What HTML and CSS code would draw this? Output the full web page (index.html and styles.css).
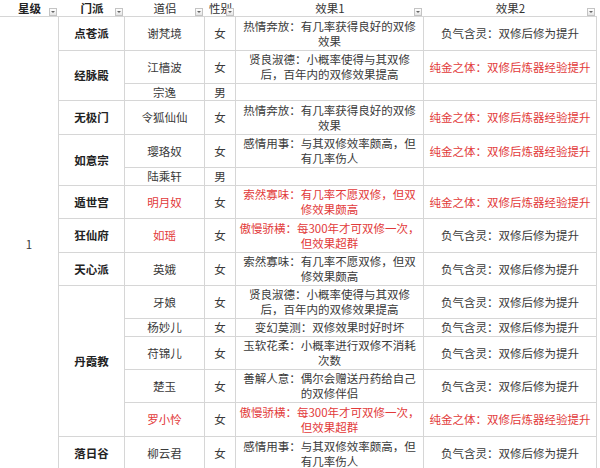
FILE: index.html
```html
<!DOCTYPE html>
<html lang="zh">
<head>
<meta charset="utf-8">
<title>双修伴侣</title>
<link rel="stylesheet" href="styles.css">
</head>
<body>
<div class="sheet">
  <div class="hd bold">星级<span class="filter"></span></div>
  <div class="hd bold">门派<span class="filter"></span></div>
  <div class="hd">道侣<span class="filter"></span></div>
  <div class="hd">性别<span class="filter"></span></div>
  <div class="hd">效果1<span class="filter"></span></div>
  <div class="hd">效果2<span class="filter"></span></div>

  <div class="c star">1</div>

  <div class="c sect">点苍派</div>
  <div class="c">谢梵境</div>
  <div class="c">女</div>
  <div class="c">热情奔放：有几率获得良好的双修<br>效果</div>
  <div class="c">负气含灵：双修后修为提升</div>

  <div class="c sect span2">经脉殿</div>
  <div class="c">江樯波</div>
  <div class="c">女</div>
  <div class="c">贤良淑德：小概率使得与其双修<br>后，百年内的双修效果提高</div>
  <div class="c red">纯金之体：双修后炼器经验提升</div>
  <div class="c">宗逸</div>
  <div class="c">男</div>
  <div class="c"></div>
  <div class="c"></div>

  <div class="c sect">无极门</div>
  <div class="c">令狐仙仙</div>
  <div class="c">女</div>
  <div class="c">热情奔放：有几率获得良好的双修<br>效果</div>
  <div class="c red">纯金之体：双修后炼器经验提升</div>

  <div class="c sect span2">如意宗</div>
  <div class="c">璎珞奴</div>
  <div class="c">女</div>
  <div class="c">感情用事：与其双修效率颇高，但<br>有几率伤人</div>
  <div class="c red">纯金之体：双修后炼器经验提升</div>
  <div class="c">陆乘轩</div>
  <div class="c">男</div>
  <div class="c"></div>
  <div class="c"></div>

  <div class="c sect">遁世宫</div>
  <div class="c red">明月奴</div>
  <div class="c">女</div>
  <div class="c red">索然寡味：有几率不愿双修，但双<br>修效果颇高</div>
  <div class="c red">纯金之体：双修后炼器经验提升</div>

  <div class="c sect">狂仙府</div>
  <div class="c red">如瑶</div>
  <div class="c">女</div>
  <div class="c red">傲慢骄横：每300年才可双修一次，<br>但效果超群</div>
  <div class="c">负气含灵：双修后修为提升</div>

  <div class="c sect">天心派</div>
  <div class="c">英娥</div>
  <div class="c">女</div>
  <div class="c">索然寡味：有几率不愿双修，但双<br>修效果颇高</div>
  <div class="c">负气含灵：双修后修为提升</div>

  <div class="c sect span5">丹霞教</div>
  <div class="c">牙娘</div>
  <div class="c">女</div>
  <div class="c">贤良淑德：小概率使得与其双修<br>后，百年内的双修效果提高</div>
  <div class="c">负气含灵：双修后修为提升</div>
  <div class="c">杨妙儿</div>
  <div class="c">女</div>
  <div class="c">变幻莫测：双修效果时好时坏</div>
  <div class="c">负气含灵：双修后修为提升</div>
  <div class="c">苻锦儿</div>
  <div class="c">女</div>
  <div class="c">玉软花柔：小概率进行双修不消耗<br>次数</div>
  <div class="c">负气含灵：双修后修为提升</div>
  <div class="c">楚玉</div>
  <div class="c">女</div>
  <div class="c">善解人意：偶尔会赠送丹药给自己<br>的双修伴侣</div>
  <div class="c">负气含灵：双修后修为提升</div>
  <div class="c red">罗小怜</div>
  <div class="c">女</div>
  <div class="c red">傲慢骄横：每300年才可双修一次，<br>但效果超群</div>
  <div class="c red">纯金之体：双修后炼器经验提升</div>

  <div class="c sect">落日谷</div>
  <div class="c">柳云君</div>
  <div class="c">女</div>
  <div class="c">感情用事：与其双修效率颇高，但<br>有几率伤人</div>
  <div class="c">负气含灵：双修后修为提升</div>
</div>
</body>
</html>
```
FILE: styles.css
```css
html, body {
  margin: 0;
  padding: 0;
  background: #ffffff;
  overflow: hidden;
}

body {
  font-family: "Noto Sans CJK SC", "Noto Sans", sans-serif;
  font-size: 11.5px;
  color: #3a3a3a;
}

.sheet {
  display: grid;
  width: 597px;
  grid-template-columns: 59px 66px 80px 31px 188px 173px;
  grid-template-rows: 17px 34px 33px 17px 34px 33px 18px 33px 34px 33px 33px 18px 33px 33px 34px 34px;
}

.hd {
  position: relative;
  display: flex;
  align-items: center;
  justify-content: center;
  border-bottom: 1px solid #d6d6d6;
  box-sizing: border-box;
  line-height: 14px;
  padding-bottom: 1px;
  color: #333;
}

.bold {
  font-weight: bold;
  color: #222;
}

.filter {
  position: absolute;
  right: 2px;
  bottom: 0;
  width: 8px;
  height: 8px;
  box-sizing: border-box;
  border: 1px solid #c4c4c4;
  background: linear-gradient(#ffffff, #e6e6e6);
}

.filter::after {
  content: "";
  position: absolute;
  left: 1px;
  top: 2px;
  border-left: 2px solid transparent;
  border-right: 2px solid transparent;
  border-top: 2px solid #666;
}

.c {
  display: flex;
  align-items: center;
  justify-content: center;
  text-align: center;
  box-sizing: border-box;
  border-right: 1px solid #d6d6d6;
  border-bottom: 1px solid #d6d6d6;
  line-height: 15px;
  white-space: nowrap;
  overflow: hidden;
}

.star {
  grid-row: span 15;
  border-bottom: none;
}

.sect {
  font-weight: bold;
  color: #222;
}

.span2 {
  grid-row: span 2;
}

.span5 {
  grid-row: span 5;
}

.red {
  color: #e23a3a;
}
```
